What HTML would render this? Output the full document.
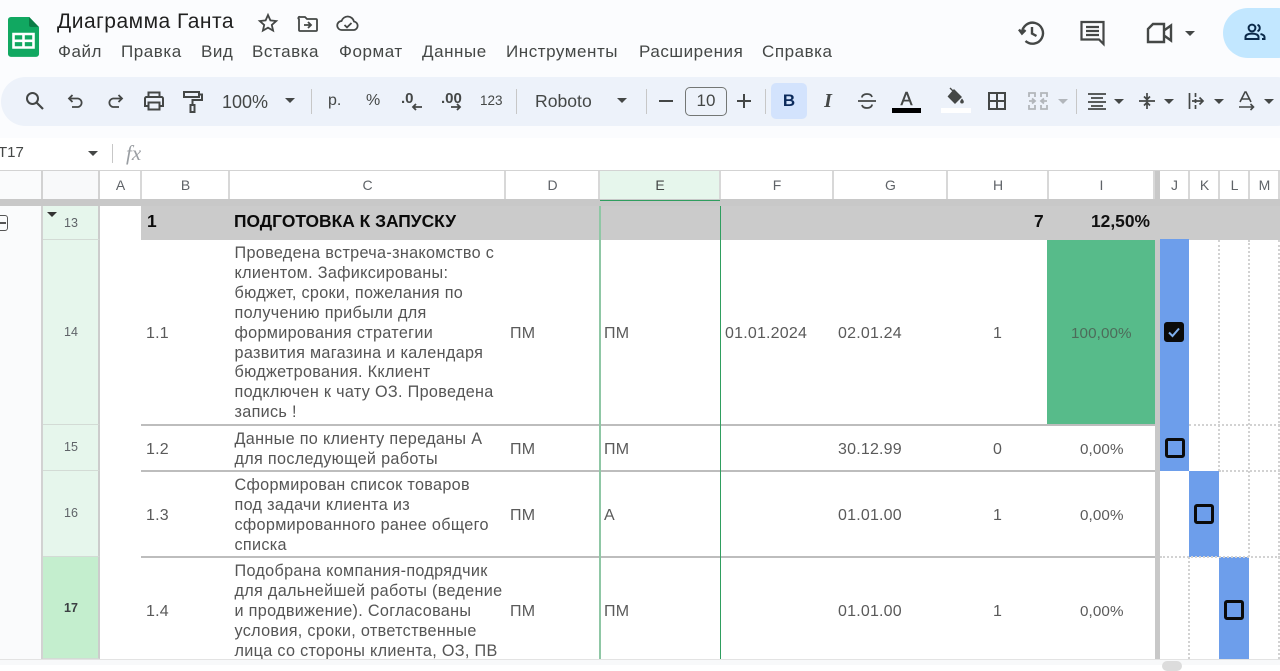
<!DOCTYPE html>
<html lang="ru"><head><meta charset="utf-8"><title>Диаграмма Ганта</title>
<style>
html,body{margin:0;padding:0;width:1280px;height:665px;overflow:hidden;background:#fff;font-family:"Liberation Sans","DejaVu Sans",sans-serif;color:#444746}
div,span{position:absolute;white-space:nowrap;box-sizing:border-box}
svg{position:absolute;overflow:visible}
.m{top:42px;font-size:17px;letter-spacing:.55px;line-height:20px;color:#444746}
.t{font-size:15px;line-height:20px;color:#5f6368}
.h{top:171px;height:28px;line-height:28px;text-align:center;font-size:14px;color:#5f6368;background:#fff;border-right:2px solid #d8d8d8;padding-left:1px}
.r{left:43px;width:57px;background:#e6f6ec;border-bottom:1px solid #d3dbd5;border-right:2px solid #ccc;text-align:center;font-size:12.5px;color:#5f6368;padding-left:1px}
.c{font-size:16px;letter-spacing:.2px;line-height:20px;color:#5a5a5a}
.p{font-size:15.2px;letter-spacing:.1px;line-height:20px;color:#5a5a5a}
.w{font-size:16.2px;letter-spacing:.32px;line-height:19.9px;color:#555}
.b{font-size:17.4px;font-weight:bold;line-height:20px;color:#111}
.l{height:2px;background:#bdbdbd}
.cb{width:20px;height:20px;border:3px solid #0b0b0b;border-radius:3px}
.d{width:0;border-left:2px dotted #d2d2d2}
.dh{height:0;border-top:2px dotted #d2d2d2}
.i{stroke:#444746;stroke-width:1.8;fill:none}
.ar{width:0;height:0;border-left:5px solid transparent;border-right:5px solid transparent;border-top:5px solid #444746}
</style></head><body>
<div style="left:0;top:0;width:1280px;height:171px;background:#fff"></div>
<div style="left:0;top:0;width:1280px;height:140px;background:#fbfcfe"></div>

<!-- Logo -->
<svg style="left:7px;top:15px" width="33" height="44" viewBox="0 0 33 44"><path d="M3 1H22L32 12V40a3 3 0 0 1-3 3H3a3 3 0 0 1-3-3V4a3 3 0 0 1 3-3z" fill="#11a861" transform="translate(1 1) scale(.97 .95)"/><path d="M22 2L32 12H24a2 2 0 0 1-2-2z" fill="#0b7c45"/><path d="M6.500 19H26.500V32.500H6.500z" fill="none" stroke="#fff" stroke-width="2.6"/><path d="M6.500 25.800H26.500M16.500 19V32.500" stroke="#fff" stroke-width="2.6"/></svg>

<div style="left:57px;top:9px;font-size:21px;letter-spacing:.5px;line-height:26px;color:#1f1f1f">Диаграмма Ганта</div>
<svg style="left:258px;top:13px" width="20" height="20" viewBox="0 0 20 20"><path class="i" d="M10 2l2.400 5.400 5.800.6-4.400 3.900 1.300 5.700L10 14.700 4.900 17.600l1.300-5.700L1.800 8l5.800-.6z"/></svg>
<svg style="left:297px;top:14px" width="22" height="20" viewBox="0 0 22 20"><path class="i" d="M2 5V16a1 1 0 0 0 1 1H19a1 1 0 0 0 1-1V6a1 1 0 0 0-1-1H10L8 3H3a1 1 0 0 0-1 2zM7 11h7M11 8l3 3-3 3"/></svg>
<svg style="left:336px;top:14px" width="24" height="20" viewBox="0 0 24 20"><path class="i" d="M6 16a4.500 4.500 0 0 1-.5-9A6.500 6.500 0 0 1 18 7.500a4.300 4.300 0 0 1 0 8.500zM8.500 11l2.500 2.400 4.500-4.400"/></svg>

<div class="m" style="left:58px">Файл</div>
<div class="m" style="left:121px">Правка</div>
<div class="m" style="left:201px">Вид</div>
<div class="m" style="left:252px">Вставка</div>
<div class="m" style="left:339px">Формат</div>
<div class="m" style="left:422px">Данные</div>
<div class="m" style="left:506px">Инструменты</div>
<div class="m" style="left:639px">Расширения</div>
<div class="m" style="left:762px">Справка</div>

<!-- Right top icons -->
<svg style="left:1018px;top:19px" width="28" height="28" viewBox="0 0 28 28"><path d="M4 14A10.500 10.500 0 1 1 7.500 22M1 10.500l3 4 3.500-3.500M14 8v6.500l4.500 2.500" fill="none" stroke="#444746" stroke-width="2.400"/></svg>
<svg style="left:1079px;top:19px" width="28" height="28" viewBox="0 0 28 28"><path d="M2.500 3H24.500V25L20 20.500H2.500zM7 8H20M7 12H20M7 16H20" fill="none" stroke="#444746" stroke-width="2.200"/></svg>
<svg style="left:1145px;top:21px" width="28" height="24" viewBox="0 0 28 24"><path d="M8 3H19V21H3V8zM19 9.500L26 4.500V19.500L19 14.500" fill="none" stroke="#444746" stroke-width="2.400"/></svg>
<div class="ar" style="left:1185px;top:31px"></div>
<div style="left:1223px;top:8px;width:80px;height:50px;border-radius:25px;background:#c2e7ff"></div>
<svg style="left:1243px;top:22px" width="24" height="20" viewBox="0 0 24 20"><circle cx="9" cy="6" r="3.400" fill="none" stroke="#0b2a4a" stroke-width="2"/><path d="M2.500 17v-2c0-2.300 3-3.400 6.500-3.400s6.500 1.100 6.500 3.400v2zM14.500 2.800a3.400 3.400 0 0 1 0 6.400M17.500 12c2 .5 4 1.500 4 3v2h-2.500" fill="none" stroke="#0b2a4a" stroke-width="2"/></svg>

<!-- Toolbar -->
<div style="left:1px;top:77px;width:1300px;height:49px;border-radius:25px;background:#edf2fa"></div>
<svg style="left:25px;top:91px" width="20" height="20" viewBox="0 0 20 20"><circle cx="7.500" cy="7.500" r="5.500" class="i" style="stroke-width:2"/><path d="M11.500 11.500L18 18" class="i" style="stroke-width:2.200"/></svg>
<svg style="left:67px;top:92px" width="18" height="18" viewBox="0 0 18 18"><path class="i" d="M5.500 3L2 6.500 5.500 10M2.500 6.500H11a4.300 4.300 0 0 1 0 8.500H5"/></svg>
<svg style="left:106px;top:92px" width="18" height="18" viewBox="0 0 18 18"><path class="i" d="M12.500 3L16 6.500 12.500 10M15.500 6.500H7a4.300 4.300 0 0 0 0 8.500H13"/></svg>
<svg style="left:143px;top:90px" width="22" height="22" viewBox="0 0 22 22"><path class="i" style="stroke-width:2" d="M5.500 7V2.500H16.500V7M5.500 16H2V8.500a1.500 1.500 0 0 1 1.500-1.500H18.500A1.500 1.500 0 0 1 20 8.500V16H16.500M5.500 12.500H16.500V19.500H5.500z"/></svg>
<svg style="left:182px;top:90px" width="22" height="24" viewBox="0 0 22 24"><path class="i" style="stroke-width:2" d="M2 2H17V7H2zM17 4.500H20V10H10.500V15M8.500 15H12.500V22H8.500z"/></svg>
<div class="t" style="left:222px;top:91px;font-size:18px;line-height:22px;color:#444746">100%</div>
<div class="ar" style="left:285px;top:98px"></div>
<div style="left:311px;top:89px;width:1px;height:25px;background:#c7c7c7"></div>
<div class="t" style="left:328px;top:91px;font-size:16px;color:#444746">р.</div>
<div class="t" style="left:366px;top:91px;font-size:16px;color:#444746">%</div>
<div style="left:401px;top:89px;font-size:15px;font-weight:bold;line-height:20px;color:#444746">.0</div>
<svg style="left:411px;top:103px" width="12" height="8" viewBox="0 0 12 8"><path d="M11 4H2M5 1L2 4l3 3" class="i"/></svg>
<div style="left:441px;top:89px;font-size:15px;font-weight:bold;line-height:20px;color:#444746">.00</div>
<svg style="left:450px;top:103px" width="12" height="8" viewBox="0 0 12 8"><path d="M1 4H10M7 1l3 3-3 3" class="i"/></svg>
<div class="t" style="left:480px;top:91px;font-size:13.500px;color:#444746">123</div>
<div style="left:516px;top:89px;width:1px;height:25px;background:#c7c7c7"></div>
<div class="t" style="left:535px;top:91px;font-size:17.6px;color:#444746">Roboto</div>
<div class="ar" style="left:617px;top:98px"></div>
<div style="left:646px;top:89px;width:1px;height:25px;background:#c7c7c7"></div>
<div style="left:659px;top:100px;width:14px;height:2px;background:#444746"></div>
<div style="left:685px;top:87px;width:42px;height:29px;border:1.500px solid #747775;border-radius:5px;text-align:center;line-height:26px;font-size:17px;color:#444746">10</div>
<svg style="left:737px;top:94px" width="14" height="14" viewBox="0 0 14 14"><path d="M7 0V14M0 7H14" stroke="#444746" stroke-width="2"/></svg>
<div style="left:765px;top:89px;width:1px;height:25px;background:#c7c7c7"></div>
<div style="left:771px;top:83px;width:36px;height:36px;border-radius:5px;background:#d3e3fd"></div>
<div style="left:771px;top:91px;width:36px;text-align:center;font-size:17px;font-weight:bold;line-height:20px;color:#0b2a5c">B</div>
<div style="left:810px;top:91px;width:36px;text-align:center;font-size:20px;font-style:italic;font-weight:bold;line-height:20px;color:#444746;font-family:'Liberation Serif',serif">I</div>
<svg style="left:857px;top:92px" width="20" height="18" viewBox="0 0 20 18"><path class="i" d="M1 9H19M15 5C14.500 3 12.500 2 10 2 7 2 5 3.500 5 5.500M5 13c.5 2 2.500 3 5 3 3 0 5-1.500 5-3.500"/></svg>
<div style="left:892px;top:90px;width:29px;text-align:center;font-size:18px;line-height:18px;color:#444746;-webkit-text-stroke:.4px #444746">A</div>
<div style="left:892px;top:108px;width:29px;height:5px;background:#000"></div>
<svg style="left:946px;top:87px" width="20" height="20" viewBox="0 0 20 20"><path d="M4 1L8 5M8 3L15 10 9 16 2.500 9.500z" fill="#444746" stroke="#444746" stroke-width="1.400"/><path d="M16 11.500c1.200 1.500 1.800 2.300 1.800 3.200a1.800 1.800 0 0 1-3.600 0c0-.9.600-1.700 1.800-3.200z" fill="#444746"/></svg>
<div style="left:941px;top:108px;width:30px;height:5px;background:#fff"></div>
<svg style="left:988px;top:92px" width="18" height="18" viewBox="0 0 18 18"><path class="i" style="stroke-width:2" d="M1 1H17V17H1zM1 9H17M9 1V17"/></svg>
<svg style="left:1028px;top:92px" width="20" height="18" viewBox="0 0 20 18"><path d="M1 5V1H7V5M13 5V1H19V5M1 13V17H7V13M13 13V17H19V13M1 9H7M4 6.500L7 9 4 11.500M19 9H13M16 6.500L13 9 16 11.500" stroke="#b2b6bb" stroke-width="1.800" fill="none"/></svg>
<div class="ar" style="left:1058px;top:99px;border-top-color:#b2b6bb"></div>
<div style="left:1076px;top:89px;width:1px;height:25px;background:#c7c7c7"></div>
<svg style="left:1087px;top:92px" width="20" height="18" viewBox="0 0 20 18"><path d="M1 2H19M4 6H16M1 10H19M4 14H16M1 17H19" stroke="#444746" stroke-width="1.700"/></svg>
<div class="ar" style="left:1114px;top:99px"></div>
<svg style="left:1139px;top:92px" width="16" height="18" viewBox="0 0 16 18"><path d="M0 9H16M8 1V6.500M8 11.500V17M5 4.500L8 7.500 11 4.500M5 13.500L8 10.500 11 13.500" stroke="#444746" stroke-width="1.700" fill="none"/></svg>
<div class="ar" style="left:1164px;top:99px"></div>
<svg style="left:1188px;top:92px" width="18" height="18" viewBox="0 0 18 18"><path d="M1.500 1V17M7.500 1V5M7.500 7V11M7.500 13V17M4 9H15M11.500 5.500L15 9 11.500 12.500" stroke="#444746" stroke-width="1.700" fill="none"/></svg>
<div class="ar" style="left:1214px;top:99px"></div>
<svg style="left:1238px;top:91px" width="18" height="20" viewBox="0 0 18 20"><path d="M2 11L7 1H8L13 11M4 8H11M1 16H15M12.500 13L15.500 16 12.500 19" stroke="#444746" stroke-width="1.600" fill="none"/></svg>
<div class="ar" style="left:1264px;top:99px"></div>

<!-- Formula bar -->
<div style="left:0;top:138px;width:1280px;height:33px;background:#fff"></div>
<div style="left:-2px;top:143px;font-size:15px;line-height:20px;color:#444746">T17</div>
<div class="ar" style="left:88px;top:151px"></div>
<div style="left:112px;top:144px;width:1px;height:19px;background:#c7c7c7"></div>
<div style="left:126px;top:142px;font-size:21px;font-style:italic;line-height:22px;color:#9a9ea3;font-family:'Liberation Serif',serif">fx</div>

<!-- Left gutter -->
<div style="left:0;top:171px;width:43px;height:488px;background:#fafbfc;border-right:2px solid #d2d2d2"></div>
<div style="left:43px;top:171px;width:57px;height:28px;background:#f8f9fa;border-right:2px solid #d2d2d2"></div>
<div style="left:-4px;top:215px;width:12px;height:16px;border:1.500px solid #555;border-radius:3px"></div>
<div style="left:-1px;top:222px;width:7px;height:2px;background:#555"></div>

<!-- Column headers -->
<div class="h" style="left:100px;width:42px">A</div>
<div class="h" style="left:142px;width:88px">B</div>
<div class="h" style="left:230px;width:276px">C</div>
<div class="h" style="left:506px;width:94px">D</div>
<div class="h" style="left:600px;width:121px;background:#e6f6ec;color:#444746">E</div>
<div class="h" style="left:721px;width:113px">F</div>
<div class="h" style="left:834px;width:114px">G</div>
<div class="h" style="left:948px;width:101px">H</div>
<div class="h" style="left:1049px;width:106px">I</div>
<div class="h" style="left:1160px;width:30px">J</div>
<div class="h" style="left:1190px;width:30px">K</div>
<div class="h" style="left:1220px;width:30px">L</div>
<div class="h" style="left:1250px;width:30px">M</div>
<div style="left:0;top:170px;width:1280px;height:1px;background:#d3d3d3"></div>

<!-- Frozen bars -->
<div style="left:0;top:199px;width:1280px;height:7px;background:#c8c8c8"></div>
<div style="left:1155px;top:171px;width:5px;height:488px;background:#c8c8c8"></div>

<!-- Row 13 band -->
<div style="left:141px;top:206px;width:1139px;height:34px;background:#cbcbcb"></div>
<div class="b" style="left:147px;top:211px;color:#0b0b0b">1</div>
<div class="b" style="left:234px;top:211px;color:#0b0b0b">ПОДГОТОВКА К ЗАПУСКУ</div>
<div class="b" style="left:1034px;top:211px">7</div>
<div class="b" style="left:1091px;top:211px">12,50%</div>

<!-- Row headers -->
<div class="r" style="top:206px;height:34px;line-height:34px">13</div>
<div class="ar" style="left:47px;top:212px;border-top-color:#333"></div>
<div class="r" style="top:240px;height:185px;line-height:184px">14</div>
<div class="r" style="top:425px;height:46px;line-height:45px">15</div>
<div class="r" style="top:471px;height:86px;line-height:85px">16</div>
<div class="r" style="top:557px;height:102px;line-height:102px;background:#c4eece;font-weight:bold;color:#3c4043">17</div>

<!-- Fills -->
<div style="left:1047px;top:240px;width:108px;height:185px;background:#57bb8a"></div>
<div style="left:1160px;top:239px;width:29px;height:232px;background:#6d9eeb"></div>
<div style="left:1189px;top:471px;width:30px;height:86px;background:#6d9eeb"></div>
<div style="left:1219px;top:557px;width:30px;height:102px;background:#6d9eeb"></div>

<!-- Grid dotted -->
<div class="d" style="left:1218px;top:240px;height:231px"></div>
<div class="d" style="left:1248px;top:240px;height:317px"></div>
<div class="d" style="left:1278px;top:240px;height:419px"></div>
<div class="d" style="left:1188px;top:557px;height:102px"></div>
<div class="dh" style="left:1189px;top:424px;width:91px"></div>
<div class="dh" style="left:1219px;top:470px;width:61px"></div>
<div class="dh" style="left:1160px;top:556px;width:120px"></div>

<!-- Row lines -->
<div class="l" style="left:141px;top:424px;width:1014px"></div>
<div class="l" style="left:141px;top:470px;width:1014px"></div>
<div class="l" style="left:141px;top:556px;width:1014px"></div>

<!-- Selection lines -->
<div style="left:600px;top:200px;width:120px;height:1px;background:#2f9e5f"></div>
<div style="left:599px;top:206px;width:2px;height:453px;background:#8fc7a5"></div>
<div style="left:720px;top:206px;width:1px;height:453px;background:#2f9e5f"></div>

<!-- Row 14 -->
<div class="c" style="left:146px;top:324px">1.1</div>
<div class="w" style="left:234.500px;top:244px">Проведена встреча-знакомство с<br>клиентом. Зафиксированы:<br>бюджет, сроки, пожелания по<br>получению прибыли для<br>формирования стратегии<br>развития магазина и календаря<br>бюджетрования. Кклиент<br>подключен к чату ОЗ. Проведена<br>запись !</div>
<div class="c" style="left:510px;top:324px">ПМ</div>
<div class="c" style="left:604px;top:324px">ПМ</div>
<div class="c" style="left:725px;top:324px">01.01.2024</div>
<div class="c" style="left:838px;top:324px">02.01.24</div>
<div class="c" style="left:993px;top:324px">1</div>
<div class="p" style="left:1071px;top:324px;color:#4d6b5a">100,00%</div>
<div class="cb" style="left:1164px;top:322px;background:#0b0b0b"></div>
<svg style="left:1167px;top:325px" width="14" height="14" viewBox="0 0 14 14"><path d="M2 7.500L5.500 11 12 3.500" fill="none" stroke="#7fb0f0" stroke-width="2"/></svg>

<!-- Row 15 -->
<div class="c" style="left:146px;top:440px">1.2</div>
<div class="w" style="left:234.500px;top:430px">Данные по клиенту переданы А<br>для последующей работы</div>
<div class="c" style="left:510px;top:440px">ПМ</div>
<div class="c" style="left:604px;top:440px">ПМ</div>
<div class="c" style="left:838px;top:440px">30.12.99</div>
<div class="c" style="left:993px;top:440px">0</div>
<div class="p" style="left:1080px;top:440px">0,00%</div>
<div class="cb" style="left:1165px;top:438px"></div>

<!-- Row 16 -->
<div class="c" style="left:146px;top:506px">1.3</div>
<div class="w" style="left:234.500px;top:476px">Сформирован список товаров<br>под задачи клиента из<br>сформированного ранее общего<br>списка</div>
<div class="c" style="left:510px;top:506px">ПМ</div>
<div class="c" style="left:604px;top:506px">А</div>
<div class="c" style="left:838px;top:506px">01.01.00</div>
<div class="c" style="left:993px;top:506px">1</div>
<div class="p" style="left:1080px;top:506px">0,00%</div>
<div class="cb" style="left:1194px;top:504px"></div>

<!-- Row 17 -->
<div class="c" style="left:146px;top:602px">1.4</div>
<div class="w" style="left:234.500px;top:562px">Подобрана компания-подрядчик<br>для дальнейшей работы (ведение<br>и продвижение). Согласованы<br>условия, сроки, ответственные<br>лица со стороны клиента, ОЗ, ПВ</div>
<div class="c" style="left:510px;top:602px">ПМ</div>
<div class="c" style="left:604px;top:602px">ПМ</div>
<div class="c" style="left:838px;top:602px">01.01.00</div>
<div class="c" style="left:993px;top:602px">1</div>
<div class="p" style="left:1080px;top:602px">0,00%</div>
<div class="cb" style="left:1224px;top:600px"></div>

<!-- Bottom -->
<div style="left:0;top:659px;width:1280px;height:6px;background:#f8f9fa;border-top:1px solid #e3e3e3"></div>
<div style="left:1162px;top:661px;width:20px;height:10px;border-radius:6px;background:#dcdcdc"></div>
</body></html>
